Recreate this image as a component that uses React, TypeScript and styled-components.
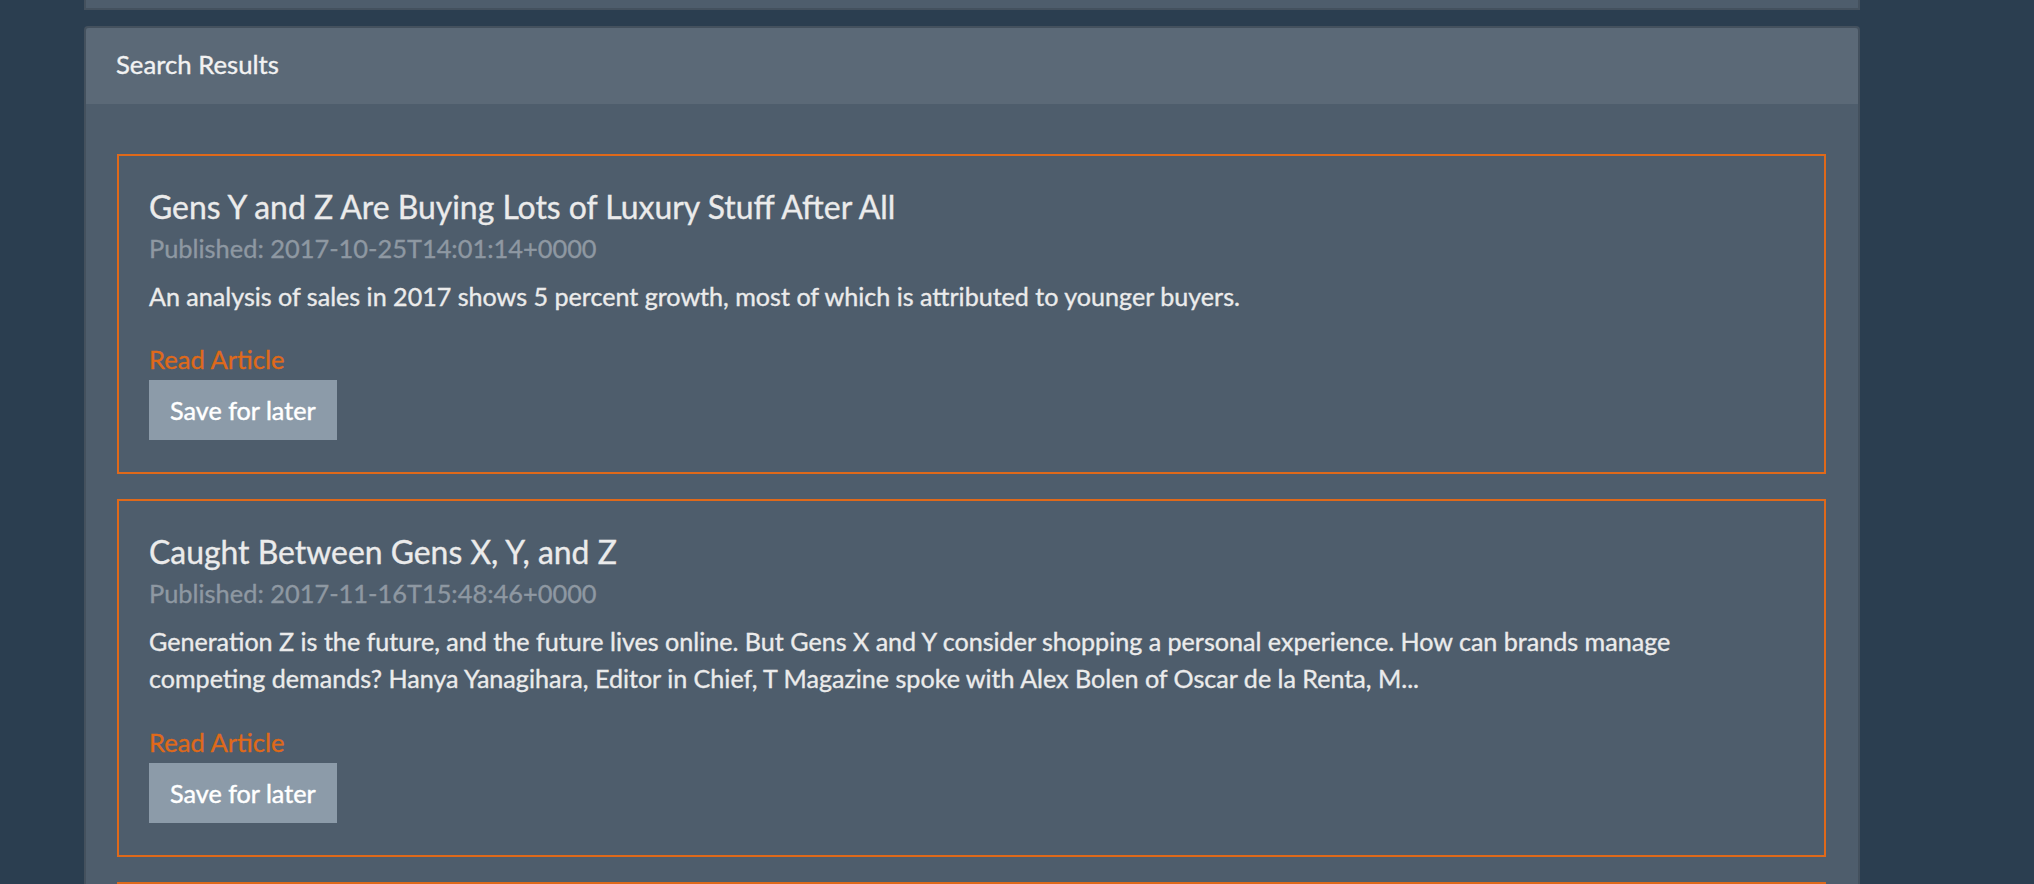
import React from "react";
import styled, { createGlobalStyle } from "styled-components";

const GlobalStyle = createGlobalStyle`
  html, body { margin: 0; padding: 0; }
  body {
    background: #2b3e50;
    font-family: Lato, "Noto Sans", sans-serif;
    color: #ebebeb;
    -webkit-text-stroke: 0.35px currentColor;
  }
`;

const Page = styled.div`
  padding-left: 84px;
  width: 1776px;
  display: flex;
  flex-direction: column;
  gap: 16px;
`;

const PrevPanelEnd = styled.div`
  height: 10px;
  background: #4e5d6c;
  border: 2px solid rgba(0, 0, 0, 0.12);
  border-top: none;
  box-sizing: border-box;
`;

const Panel = styled.section`
  background: #4e5d6c;
  border: 2px solid rgba(0, 0, 0, 0.12);
  border-radius: 4px 4px 0 0;
`;

const PanelHeading = styled.header`
  height: 76px;
  box-sizing: border-box;
  background: #5b6977;
  padding: 0 30px 4px;
  display: flex;
  align-items: center;
  font-size: 25.7px;
  color: #f2f2f2;
  border-radius: 3px 3px 0 0;
`;

const PanelBody = styled.div`
  padding: 50px 32px 0 31px;
  display: flex;
  flex-direction: column;
  gap: 25px;
`;

const Card = styled.article`
  border: 2px solid #df691a;
  padding: 32px 30px 32px;
  display: flex;
  flex-direction: column;
  align-items: flex-start;
`;

const Title = styled.h3`
  margin: 0;
  font-size: 31.9px;
  line-height: 38px;
  font-weight: 400;
  color: #ebebeb;
`;

const Published = styled.div`
  margin-top: 7px;
  font-size: 25.4px;
  line-height: 30px;
  color: #8e98a2;
`;

const Description = styled.p`
  margin: 14.5px 0 0;
  max-width: 1580px;
  font-size: 25.1px;
  line-height: 37.5px;
  color: #ebebeb;
`;

const ReadLink = styled.a`
  margin-top: 29px;
  font-size: 25.6px;
  line-height: 30px;
  color: #df691a;
  text-decoration: none;
`;

const SaveButton = styled.button`
  margin-top: 6px;
  height: 60px;
  padding: 0 21px;
  border: none;
  border-radius: 0;
  background: #8c9ba9;
  color: #ffffff;
  font-family: Lato, "Noto Sans", sans-serif;
  font-size: 25.2px;
  -webkit-text-stroke: 0.45px currentColor;
`;

const articles = [
  {
    title: "Gens Y and Z Are Buying Lots of Luxury Stuff After All",
    published: "2017-10-25T14:01:14+0000",
    description:
      "An analysis of sales in 2017 shows 5 percent growth, most of which is attributed to younger buyers.",
  },
  {
    title: "Caught Between Gens X, Y, and Z",
    published: "2017-11-16T15:48:46+0000",
    description:
      "Generation Z is the future, and the future lives online. But Gens X and Y consider shopping a personal experience. How can brands manage competing demands? Hanya Yanagihara, Editor in Chief, T Magazine spoke with Alex Bolen of Oscar de la Renta, M...",
  },
  {
    title: "More Results",
    published: "",
    description: "",
  },
];

export default function App() {
  return (
    <>
      <GlobalStyle />
      <Page>
        <PrevPanelEnd />
        <Panel>
          <PanelHeading>Search Results</PanelHeading>
          <PanelBody>
            {articles.map((a) => (
              <Card key={a.title}>
                <Title>{a.title}</Title>
                <Published>Published: {a.published}</Published>
                <Description>{a.description}</Description>
                <ReadLink href="#">Read Article</ReadLink>
                <SaveButton>Save for later</SaveButton>
              </Card>
            ))}
          </PanelBody>
        </Panel>
      </Page>
    </>
  );
}
